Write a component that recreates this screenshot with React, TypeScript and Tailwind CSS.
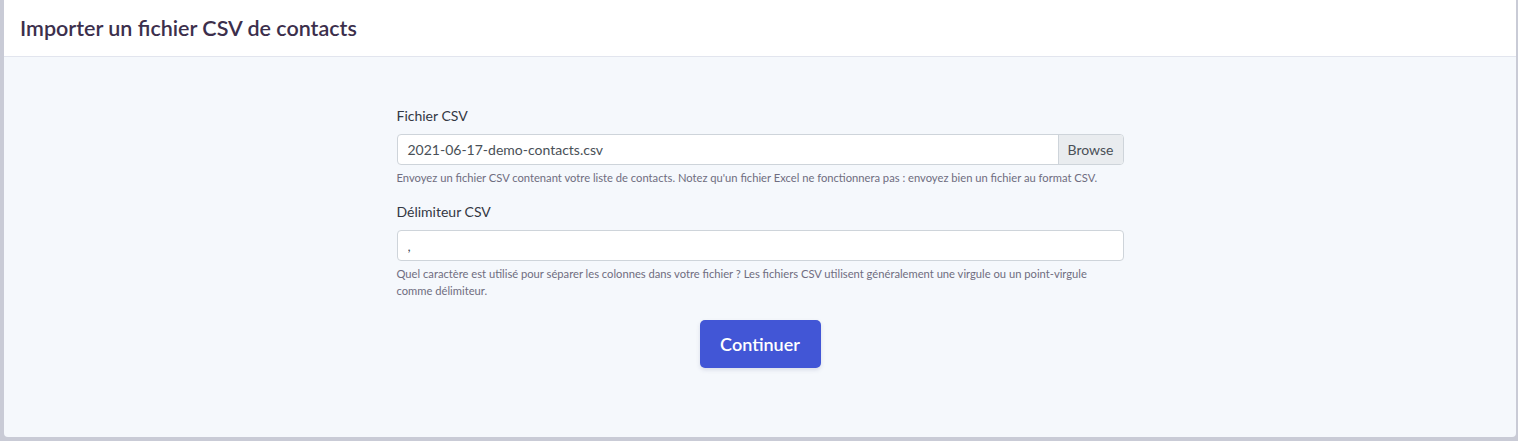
const font = { fontFamily: '"Segoe UI", Lato, "Noto Sans", sans-serif' };

function Field({
  label,
  help,
  children,
}: {
  label: string;
  help: string;
  children: React.ReactNode;
}) {
  return (
    <div className="mb-[15px]">
      <label className="mb-2 block text-[14px] leading-[21px] text-[#333743]">{label}</label>
      {children}
      <p className="mt-1 text-[11.2px] leading-[17px] text-[#6f6d80]">{help}</p>
    </div>
  );
}

export default function App() {
  return (
    <div className="min-h-screen bg-[#c9cbd6] pb-[4px] pl-[4px] pr-[2px]" style={font}>
      <div className="overflow-hidden rounded-b-[4px] bg-[#f5f8fc]">
        <div className="flex h-[57px] items-center border-b border-[#e2e5ee] bg-white px-4 pt-[1px]">
          <h1 className="text-[21.5px] font-semibold text-[#3c2f4c]">Importer un fichier CSV de contacts</h1>
        </div>

        <div className="mx-auto w-[727px] pb-[69px] pt-[48px]">
          <Field
            label="Fichier CSV"
            help="Envoyez un fichier CSV contenant votre liste de contacts. Notez qu'un fichier Excel ne fonctionnera pas : envoyez bien un fichier au format CSV."
          >
            <div className="flex h-[31px] overflow-hidden rounded-[4px] border border-[#ced4da] bg-white text-[14px] text-[#495057]">
              <span className="flex flex-1 items-center px-[10px]">2021-06-17-demo-contacts.csv</span>
              <span className="flex items-center border-l border-[#ced4da] bg-[#e9ecef] px-[9px]">Browse</span>
            </div>
          </Field>

          <Field
            label="Délimiteur CSV"
            help="Quel caractère est utilisé pour séparer les colonnes dans votre fichier ? Les fichiers CSV utilisent généralement une virgule ou un point-virgule comme délimiteur."
          >
            <input
              readOnly
              value=","
              className="block h-[31px] w-full rounded-[4px] border border-[#ced4da] bg-white px-[10px] text-[14px] text-[#495057] outline-none"
              style={font}
            />
          </Field>

          <div className="flex justify-center pt-[6px]">
            <button
              type="button"
              className="h-[48px] w-[121px] rounded-[5px] bg-[#4256d6] text-[18px] font-semibold text-white shadow-[0_2px_4px_rgba(60,70,120,0.15)]"
              style={font}
            >
              Continuer
            </button>
          </div>
        </div>
      </div>
    </div>
  );
}
